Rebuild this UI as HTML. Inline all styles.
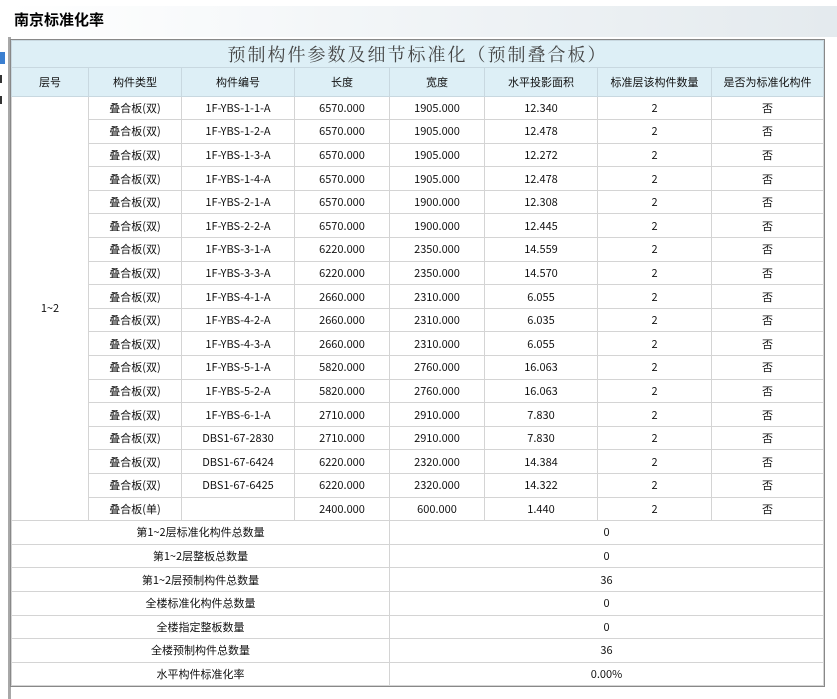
<!DOCTYPE html>
<html><head><meta charset="utf-8"><style>
body{margin:0;width:837px;height:699px;background:#fff;position:relative;overflow:hidden;font-family:"Noto Sans CJK SC","Liberation Sans",sans-serif;}
.bar{position:absolute;left:8px;top:6px;width:829px;height:31px;background:linear-gradient(90deg,#fff 0%,#f3f6f8 40%,#e4eaee 100%);border-bottom:1px solid #c9d0d4}
.bar span{position:absolute;left:6px;top:3px;font-size:15px;font-weight:bold;color:#000}
.frame{position:absolute;left:8px;top:37px;width:826px;height:662px;border-left:3px solid #a8a8a8;background:#fff}
table{position:absolute;left:11px;top:40px;border-collapse:collapse;table-layout:fixed;font-size:11px;color:#111;outline:1px solid #888}
td{border:1px solid #d4d4d4;text-align:center;height:22.6px;padding:0;white-space:nowrap;line-height:14px;vertical-align:middle}
.t td{height:26px;background:#ddeff6;font-family:"Noto Serif CJK SC",serif;font-size:18px;line-height:22px;letter-spacing:2px;color:#444;border-color:#c8d8e0}
.h td{height:27.5px;background:#ddeff6;border-color:#c8d8e0}
.l{position:absolute;left:0;width:5px;height:8px;background:#3b7fd0}
</style></head><body>
<div class="bar"><span>南京标准化率</span></div>
<div class="frame"></div>
<div class="l" style="top:52px;height:12px"></div>
<div class="l" style="top:75px;width:2px;background:#333"></div>
<div class="l" style="top:96px;width:2px;background:#333"></div>
<table>
<colgroup><col style="width:77px"><col style="width:93px"><col style="width:113px"><col style="width:95px"><col style="width:95px"><col style="width:113px"><col style="width:114px"><col style="width:112px"></colgroup>
<tr class="t"><td colspan="8">预制构件参数及细节标准化（预制叠合板）</td></tr>
<tr class="h"><td>层号</td><td>构件类型</td><td>构件编号</td><td>长度</td><td>宽度</td><td>水平投影面积</td><td>标准层该构件数量</td><td>是否为标准化构件</td></tr>
<tr><td rowspan="18">1~2</td><td>叠合板(双)</td><td>1F-YBS-1-1-A</td><td>6570.000</td><td>1905.000</td><td>12.340</td><td>2</td><td>否</td></tr>
<tr><td>叠合板(双)</td><td>1F-YBS-1-2-A</td><td>6570.000</td><td>1905.000</td><td>12.478</td><td>2</td><td>否</td></tr>
<tr><td>叠合板(双)</td><td>1F-YBS-1-3-A</td><td>6570.000</td><td>1905.000</td><td>12.272</td><td>2</td><td>否</td></tr>
<tr><td>叠合板(双)</td><td>1F-YBS-1-4-A</td><td>6570.000</td><td>1905.000</td><td>12.478</td><td>2</td><td>否</td></tr>
<tr><td>叠合板(双)</td><td>1F-YBS-2-1-A</td><td>6570.000</td><td>1900.000</td><td>12.308</td><td>2</td><td>否</td></tr>
<tr><td>叠合板(双)</td><td>1F-YBS-2-2-A</td><td>6570.000</td><td>1900.000</td><td>12.445</td><td>2</td><td>否</td></tr>
<tr><td>叠合板(双)</td><td>1F-YBS-3-1-A</td><td>6220.000</td><td>2350.000</td><td>14.559</td><td>2</td><td>否</td></tr>
<tr><td>叠合板(双)</td><td>1F-YBS-3-3-A</td><td>6220.000</td><td>2350.000</td><td>14.570</td><td>2</td><td>否</td></tr>
<tr><td>叠合板(双)</td><td>1F-YBS-4-1-A</td><td>2660.000</td><td>2310.000</td><td>6.055</td><td>2</td><td>否</td></tr>
<tr><td>叠合板(双)</td><td>1F-YBS-4-2-A</td><td>2660.000</td><td>2310.000</td><td>6.035</td><td>2</td><td>否</td></tr>
<tr><td>叠合板(双)</td><td>1F-YBS-4-3-A</td><td>2660.000</td><td>2310.000</td><td>6.055</td><td>2</td><td>否</td></tr>
<tr><td>叠合板(双)</td><td>1F-YBS-5-1-A</td><td>5820.000</td><td>2760.000</td><td>16.063</td><td>2</td><td>否</td></tr>
<tr><td>叠合板(双)</td><td>1F-YBS-5-2-A</td><td>5820.000</td><td>2760.000</td><td>16.063</td><td>2</td><td>否</td></tr>
<tr><td>叠合板(双)</td><td>1F-YBS-6-1-A</td><td>2710.000</td><td>2910.000</td><td>7.830</td><td>2</td><td>否</td></tr>
<tr><td>叠合板(双)</td><td>DBS1-67-2830</td><td>2710.000</td><td>2910.000</td><td>7.830</td><td>2</td><td>否</td></tr>
<tr><td>叠合板(双)</td><td>DBS1-67-6424</td><td>6220.000</td><td>2320.000</td><td>14.384</td><td>2</td><td>否</td></tr>
<tr><td>叠合板(双)</td><td>DBS1-67-6425</td><td>6220.000</td><td>2320.000</td><td>14.322</td><td>2</td><td>否</td></tr>
<tr><td>叠合板(单)</td><td></td><td>2400.000</td><td>600.000</td><td>1.440</td><td>2</td><td>否</td></tr>
<tr><td colspan="4">第1~2层标准化构件总数量</td><td colspan="4">0</td></tr>
<tr><td colspan="4">第1~2层整板总数量</td><td colspan="4">0</td></tr>
<tr><td colspan="4">第1~2层预制构件总数量</td><td colspan="4">36</td></tr>
<tr><td colspan="4">全楼标准化构件总数量</td><td colspan="4">0</td></tr>
<tr><td colspan="4">全楼指定整板数量</td><td colspan="4">0</td></tr>
<tr><td colspan="4">全楼预制构件总数量</td><td colspan="4">36</td></tr>
<tr><td colspan="4">水平构件标准化率</td><td colspan="4">0.00%</td></tr>
</table>
</body></html>
